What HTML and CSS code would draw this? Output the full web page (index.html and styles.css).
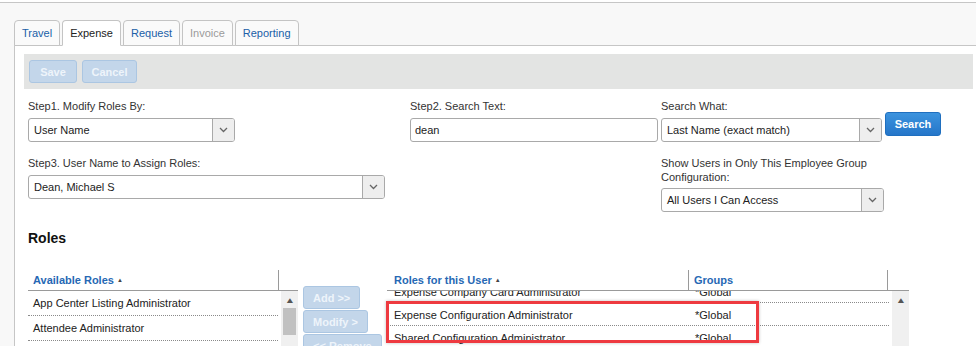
FILE: index.html
```html
<!DOCTYPE html>
<html lang="en">
<head>
    <meta charset="UTF-8">
    <title>Roles</title>
    <link rel="stylesheet" href="styles.css">
</head>
<body>
    <div class="page">
        <div class="tabs">
            <a class="tab">Travel</a>
            <a class="tab active">Expense</a>
            <a class="tab">Request</a>
            <a class="tab disabled">Invoice</a>
            <a class="tab">Reporting</a>
        </div>

        <div class="panel">
            <div class="toolbar">
                <button class="btn-light save">Save</button>
                <button class="btn-light cancel">Cancel</button>
            </div>

            <div class="form">
                <div class="field">
                    <label>Step1. Modify Roles By:</label>
                    <div class="select modify-by">
                        <span class="value">User Name</span>
                        <span class="arrow"><svg width="9" height="6" viewBox="0 0 9 6"><path d="M1 1l3.5 3.5L8 1" fill="none" stroke="#666" stroke-width="1.3"/></svg></span>
                    </div>
                </div>
                <div class="field">
                    <label>Step2. Search Text:</label>
                    <div class="input">dean</div>
                </div>
                <div class="field">
                    <label>Search What:</label>
                    <div class="inline">
                        <div class="select search-what">
                            <span class="value">Last Name (exact match)</span>
                            <span class="arrow"><svg width="9" height="6" viewBox="0 0 9 6"><path d="M1 1l3.5 3.5L8 1" fill="none" stroke="#666" stroke-width="1.3"/></svg></span>
                        </div>
                        <button class="btn-search">Search</button>
                    </div>
                </div>

                <div class="field">
                    <label>Step3. User Name to Assign Roles:</label>
                    <div class="select user-name">
                        <span class="value">Dean, Michael S</span>
                        <span class="arrow"><svg width="9" height="6" viewBox="0 0 9 6"><path d="M1 1l3.5 3.5L8 1" fill="none" stroke="#666" stroke-width="1.3"/></svg></span>
                    </div>
                </div>
                <div></div>
                <div class="field">
                    <label class="wrap">Show Users in Only This Employee Group Configuration:</label>
                    <div class="select group-config">
                        <span class="value">All Users I Can Access</span>
                        <span class="arrow"><svg width="9" height="6" viewBox="0 0 9 6"><path d="M1 1l3.5 3.5L8 1" fill="none" stroke="#666" stroke-width="1.3"/></svg></span>
                    </div>
                </div>
            </div>

            <h2 class="section-title">Roles</h2>

            <div class="roles">
                <div class="grid available">
                    <div class="grid-head">
                        <div class="col-name">Available Roles <span class="sort">&#9650;</span></div>
                        <div class="col-scroll"></div>
                    </div>
                    <div class="grid-body">
                        <div class="rows">
                            <div class="row"><span>App Center Listing Administrator</span></div>
                            <div class="row"><span>Attendee Administrator</span></div>
                            <div class="row"><span>Budget Administrator</span></div>
                        </div>
                        <div class="scrollbar">
                            <span class="up">&#9650;</span>
                            <span class="thumb"></span>
                        </div>
                    </div>
                </div>

                <div class="move-buttons">
                    <button class="btn-light">Add &gt;&gt;</button>
                    <button class="btn-light">Modify &gt;</button>
                    <button class="btn-light">&lt;&lt; Remove</button>
                </div>

                <div class="grid assigned">
                    <div class="grid-head">
                        <div class="col-role">Roles for this User <span class="sort">&#9650;</span></div>
                        <div class="col-group">Groups</div>
                        <div class="col-scroll"></div>
                    </div>
                    <div class="grid-body">
                        <div class="rows scrolled">
                            <div class="row"><span class="c-role">Expense Company Card Administrator</span><span class="c-group">*Global</span></div>
                            <div class="row"><span class="c-role">Expense Configuration Administrator</span><span class="c-group">*Global</span></div>
                            <div class="row"><span class="c-role">Shared Configuration Administrator</span><span class="c-group">*Global</span></div>
                        </div>
                        <div class="scrollbar">
                            <span class="up">&#9650;</span>
                        </div>
                    </div>
                    <div class="highlight"></div>
                </div>
            </div>
        </div>
    </div>
</body>
</html>
```

FILE: styles.css
```css
body {
    margin: 0;
    padding-top: 2px;
    background-color: #fff;
    font-family: "Liberation Sans", Arial, sans-serif;
    font-size: 11px;
    color: #333;
    height: 344px;
    overflow: hidden;
}

.page {
    border-top: 1px solid #c6c6c6;
    background-color: #f8f8f8;
    height: 400px;
}

/* Tabs */
.tabs {
    display: flex;
    gap: 2px;
    padding: 17px 0 0 14px;
}

.tab {
    display: block;
    height: 24px;
    line-height: 24px;
    padding: 0 7px;
    border: 1px solid #c4c4c4;
    border-radius: 4px 4px 0 0;
    background-color: #fafafa;
    color: #2060a8;
    margin-bottom: -1px;
    position: relative;
    white-space: nowrap;
}

.tab.active {
    background-color: #fff;
    border-bottom-color: #fff;
    color: #222;
}

.tab.disabled {
    color: #9a9a9a;
}

/* Panel */
.panel {
    margin-left: 14px;
    background-color: #fff;
    border-left: 1px solid #c6c6c6;
    border-top: 1px solid #c6c6c6;
    padding: 8px 3px 0 9px;
    height: 400px;
}

.toolbar {
    display: flex;
    gap: 5px;
    height: 35px;
    box-sizing: border-box;
    padding: 6px 5px;
    background-color: #e3e4e3;
}

.btn-light {
    height: 23px;
    padding: 0 9px;
    border: 1px solid #abc6e2;
    border-radius: 3px;
    background-color: #c3d6ea;
    color: #eef4fa;
    font-family: inherit;
    font-size: 11px;
    font-weight: bold;
    text-align: left;
    white-space: nowrap;
}

.toolbar .btn-light {
    padding: 0;
    text-align: center;
}

.save { width: 48px; }
.cancel { width: 55px; }

/* Form */
.form {
    display: grid;
    grid-template-columns: 382px 251px auto;
    row-gap: 14px;
    margin: 10px 0 0 4px;
}

.field label {
    display: block;
    line-height: 14px;
    margin-bottom: 5px;
}

.field label.wrap {
    width: 215px;
    margin-bottom: 4px;
}

.select {
    display: flex;
    height: 24px;
    box-sizing: border-box;
    border: 1px solid #a9a9a9;
    border-radius: 3px;
    background-color: #fff;
    overflow: hidden;
}

.select .value {
    flex: 1;
    line-height: 22px;
    padding-left: 5px;
    color: #222;
}

.select .arrow {
    width: 21px;
    border-left: 1px solid #a9a9a9;
    background-color: #eee;
    display: flex;
    align-items: center;
    justify-content: center;
}

.modify-by { width: 207px; }
.user-name { width: 357px; }
.search-what { width: 221px; }
.group-config { width: 223px; }

.input {
    width: 248px;
    height: 24px;
    box-sizing: border-box;
    border: 1px solid #a9a9a9;
    border-radius: 3px;
    line-height: 22px;
    padding-left: 4px;
    color: #222;
}

.inline {
    display: flex;
    align-items: flex-start;
}

.btn-search {
    margin: -6px 0 0 3px;
    height: 24px;
    width: 56px;
    border: 1px solid #1f6fbf;
    border-radius: 3px;
    background: linear-gradient(#3c93de, #2576c9);
    color: #fff;
    font-family: inherit;
    font-size: 11px;
    font-weight: bold;
}

.section-title {
    margin: 18px 0 0 4px;
    font-size: 14px;
    line-height: 16px;
    font-weight: bold;
    color: #111;
}

/* Roles grids */
.roles {
    display: flex;
    align-items: flex-start;
    margin: 24px 0 0 4px;
}

.grid {
    position: relative;
}

.grid-head {
    display: flex;
    height: 20px;
    line-height: 20px;
    border-bottom: 1px solid #9a9a9a;
    color: #2668b4;
    font-weight: bold;
}

.grid-head > div {
    box-sizing: border-box;
}

.sort {
    font-size: 6px;
    vertical-align: 2px;
    color: #444;
}

.col-name {
    width: 251px;
    padding-left: 5px;
    border-right: 1px solid #9a9a9a;
}

.available .col-scroll { width: 19px; }

.grid-body {
    display: flex;
    height: 60px;
    overflow: hidden;
}

.row {
    display: flex;
    height: 24px;
    line-height: 25px;
    border-bottom: 1px dotted #8a8a8a;
    color: #222;
}

.available .rows { width: 250px; }
.available .row span { padding-left: 5px; }

.scrollbar {
    width: 17px;
    background-color: #f0f0f0;
    margin-left: 3px;
    display: flex;
    flex-direction: column;
    align-items: center;
}

.scrollbar .up {
    font-size: 8px;
    line-height: 8px;
    margin-top: 6px;
    color: #555;
    transform: scaleX(1.3);
}

.scrollbar .thumb {
    width: 13px;
    height: 27px;
    margin-top: 3px;
    background-color: #c1c1c1;
}

.move-buttons {
    display: flex;
    flex-direction: column;
    align-items: flex-start;
    gap: 1px;
    margin: 16px 0 0 5px;
    width: 84px;
}

/* Assigned grid */
.col-role {
    width: 301px;
    padding-left: 7px;
}

.col-group {
    width: 200px;
    padding-left: 5px;
    border-left: 1px solid #9a9a9a;
    border-right: 1px solid #9a9a9a;
}

.assigned .col-scroll { width: 21px; }

.assigned .rows {
    width: 502px;
}

.assigned .rows.scrolled {
    margin-top: -11px;
}

.assigned .row {
    height: 22px;
    line-height: 24px;
}

.c-role {
    box-sizing: border-box;
    width: 301px;
    padding-left: 7px;
}

.c-group {
    padding-left: 7px;
}

.highlight {
    position: absolute;
    left: -1px;
    top: 31px;
    width: 367px;
    height: 36px;
    border: 3px solid #ee3a40;
    box-shadow: 0 0 3px rgba(0, 0, 0, 0.25);
}
```
